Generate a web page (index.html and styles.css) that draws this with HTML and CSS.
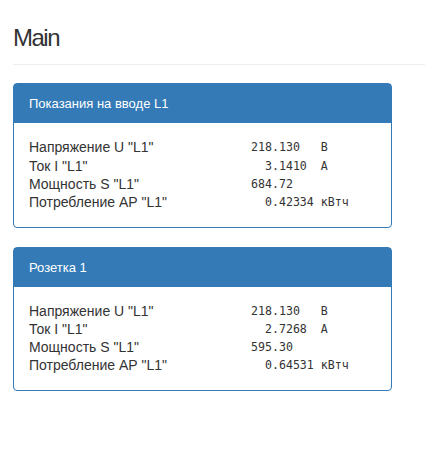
FILE: index.html
```html
<!DOCTYPE html>
<html lang="ru">
<head>
    <meta charset="UTF-8">
    <title>Main</title>
    <link rel="stylesheet" href="styles.css">
</head>
<body>
    <div class="page-header">
        <h1>Main</h1>
    </div>

    <div class="panel">
        <div class="panel-heading">Показания на вводе L1</div>
        <div class="panel-body">
            <div class="row"><span class="label">Напряжение U "L1"</span><span class="value">218.130   В</span></div>
            <div class="row"><span class="label">Ток I "L1"</span><span class="value">  3.1410  А</span></div>
            <div class="row"><span class="label">Мощность S "L1"</span><span class="value">684.72</span></div>
            <div class="row"><span class="label">Потребление АР "L1"</span><span class="value">  0.42334 кВтч</span></div>
        </div>
    </div>

    <div class="panel">
        <div class="panel-heading">Розетка 1</div>
        <div class="panel-body">
            <div class="row"><span class="label">Напряжение U "L1"</span><span class="value">218.130   В</span></div>
            <div class="row"><span class="label">Ток I "L1"</span><span class="value">  2.7268  А</span></div>
            <div class="row"><span class="label">Мощность S "L1"</span><span class="value">595.30</span></div>
            <div class="row"><span class="label">Потребление АР "L1"</span><span class="value">  0.64531 кВтч</span></div>
        </div>
    </div>
</body>
</html>
```

FILE: styles.css
```css
body {
    font-family: "Liberation Sans", Arial, sans-serif;
    font-size: 14px;
    color: #333;
    margin: 0;
    padding-left: 13px;
    background-color: #fff;
}

.page-header {
    margin: 25px 0 18px;
    padding-bottom: 13px;
    border-bottom: 1px solid #eee;
}

.page-header h1 {
    margin: 0;
    font-size: 24px;
    font-weight: normal;
    letter-spacing: -1.5px;
    line-height: 1.1;
}

.panel {
    width: 377px;
    margin-bottom: 19px;
    border: 1px solid #337ab7;
    border-radius: 4px;
    background-color: #fff;
}

.panel-heading {
    padding: 10px 15px;
    font-size: 13px;
    line-height: 19px;
    color: #fff;
    background-color: #337ab7;
}

.panel-body {
    padding: 15px;
    line-height: 18.3px;
}

.row {
    display: grid;
    grid-template-columns: 222px 1fr;
}

.value {
    font-family: "DejaVu Sans Mono", monospace;
    font-size: 11.6px;
    white-space: pre;
}
```
